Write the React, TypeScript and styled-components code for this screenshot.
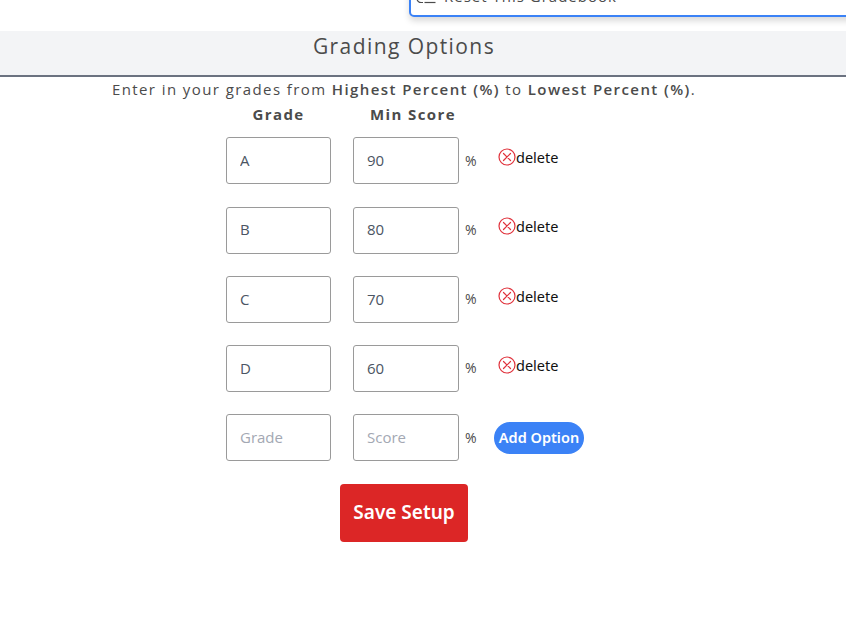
import React from "react";
import styled, { createGlobalStyle } from "styled-components";

const GlobalStyle = createGlobalStyle`
  html, body {
    margin: 0;
    padding: 0;
    background: #fff;
    font-family: "Open Sans", "Noto Sans", sans-serif;
    color: #4b4b4b;
    overflow: hidden;
  }
`;

const Page = styled.div`
  position: relative;
  width: 846px;
  height: 635px;
  overflow: hidden;
  padding-top: 31px;
  box-sizing: border-box;
`;

const Popup = styled.div`
  position: absolute;
  top: -20px;
  left: 409px;
  width: 460px;
  height: 37px;
  box-sizing: border-box;
  border: 2px solid #3b82f6;
  border-radius: 5px;
  background: #fff;
  box-shadow: 0 4px 6px rgba(0, 0, 0, 0.15);
  display: flex;
  align-items: flex-end;
  gap: 8px;
  padding: 0 0 9px 5px;
  font-size: 15px;
  letter-spacing: 1px;
  line-height: 20px;
  color: #4b4b4b;
`;

const Header = styled.div`
  height: 46px;
  box-sizing: border-box;
  background: #f3f4f6;
  border-bottom: 2px solid #6b7280;
  padding-right: 38px;
  text-align: center;
`;

const Title = styled.h2`
  margin: 0;
  font-size: 21px;
  font-weight: 400;
  line-height: 31px;
  letter-spacing: 1.42px;
  color: #4b4b4b;
`;

const Intro = styled.p`
  margin: 0;
  padding-right: 38px;
  text-align: center;
  font-size: 15px;
  line-height: 24px;
  letter-spacing: 1.41px;
`;

const Strong = styled.b`
  font-weight: 600;
`;

const Table = styled.div`
  margin-left: 226px;
  display: flex;
  flex-direction: column;
`;

const HeadRow = styled.div`
  display: flex;
  gap: 22px;
  height: 36.4px;
`;

const HeadCell = styled.div<{ $width: number; $shift?: number }>`
  width: ${(p) => p.$width}px;
  padding-left: ${(p) => p.$shift ?? 0}px;
  white-space: nowrap;
  font-size: 15px;
  font-weight: 700;
  line-height: 27px;
  letter-spacing: 1.4px;
  text-align: center;
`;

const Row = styled.div`
  display: flex;
  align-items: center;
  height: 47px;
  margin-bottom: 22.25px;
`;

const Field = styled.input<{ $width: number; $gap?: number }>`
  width: ${(p) => p.$width}px;
  margin-left: ${(p) => p.$gap ?? 0}px;
  height: 100%;
  box-sizing: border-box;
  border: 1px solid #9a9a9a;
  border-radius: 3px;
  padding: 0 13px 1.5px;
  outline: none;
  background: #fff;
  color: #4b5563;
  font-family: inherit;
  font-size: 15px;
  &::placeholder {
    color: #a3a8b3;
    opacity: 1;
  }
`;

const Unit = styled.span`
  width: 12px;
  margin-left: 6px;
  font-size: 14px;
  line-height: 20px;
  padding-bottom: 0.5px;
`;

const Delete = styled.button`
  margin-left: 21px;
  margin-top: -7.5px;
  border: 0;
  padding: 0;
  background: none;
  display: flex;
  align-items: center;
  color: #111;
  font-family: "Noto Sans", sans-serif;
  font-size: 14.5px;
  line-height: 20px;
`;

const AddButton = styled.button`
  margin-left: 17px;
  width: 90px;
  height: 32px;
  padding: 0 0 2px;
  border: 0;
  border-radius: 16px;
  background: #3b82f6;
  color: #fff;
  font-family: "Noto Sans", sans-serif;
  font-size: 14.5px;
  font-weight: 600;
`;

const Footer = styled.div`
  margin-top: 0.6px;
  margin-left: 340px;
`;

const SaveButton = styled.button`
  width: 128px;
  height: 58px;
  padding: 0 0 2px;
  border: 0;
  border-radius: 4px;
  background: #dc2626;
  color: #fff;
  font-family: "Noto Sans", sans-serif;
  font-size: 19px;
  font-weight: 600;
`;

const grades = [
  { grade: "A", score: "90" },
  { grade: "B", score: "80" },
  { grade: "C", score: "70" },
  { grade: "D", score: "60" },
];

const DeleteIcon = () => (
  <svg width="18" height="18" viewBox="0 0 18 18" fill="none" stroke="#e0323c" strokeWidth="1.2" strokeLinecap="round">
    <circle cx="9" cy="9" r="8" />
    <path d="M5.5 5.5l7 7M12.5 5.5l-7 7" />
  </svg>
);

// only the lower edge of this icon is on screen
const ResetIcon = () => (
  <svg width="20" height="18" viewBox="0 0 20 18" fill="none" stroke="#4b4b4b" strokeWidth="1.2">
    <path d="M1 11.5q1 3 4 3h2" />
    <path d="M8.5 14.5h11" />
  </svg>
);

export default function App() {
  return (
    <Page>
      <GlobalStyle />
      <Popup>
        <ResetIcon />
        <span>Reset This Gradebook</span>
      </Popup>
      <Header>
        <Title>Grading Options</Title>
      </Header>
      <Intro>
        Enter in your grades from <Strong>Highest Percent (%)</Strong> to <Strong>Lowest Percent (%)</Strong>.
      </Intro>
      <Table>
        <HeadRow>
          <HeadCell $width={105}>Grade</HeadCell>
          <HeadCell $width={106} $shift={7}>Min Score</HeadCell>
        </HeadRow>
        {grades.map((g) => (
          <Row key={g.grade}>
            <Field $width={105} defaultValue={g.grade} />
            <Field $width={106} $gap={22} defaultValue={g.score} />
            <Unit>%</Unit>
            <Delete>
              <DeleteIcon />
              delete
            </Delete>
          </Row>
        ))}
        <Row>
          <Field $width={105} placeholder="Grade" />
          <Field $width={106} $gap={22} placeholder="Score" />
          <Unit>%</Unit>
          <AddButton>Add Option</AddButton>
        </Row>
      </Table>
      <Footer>
        <SaveButton>Save Setup</SaveButton>
      </Footer>
    </Page>
  );
}
